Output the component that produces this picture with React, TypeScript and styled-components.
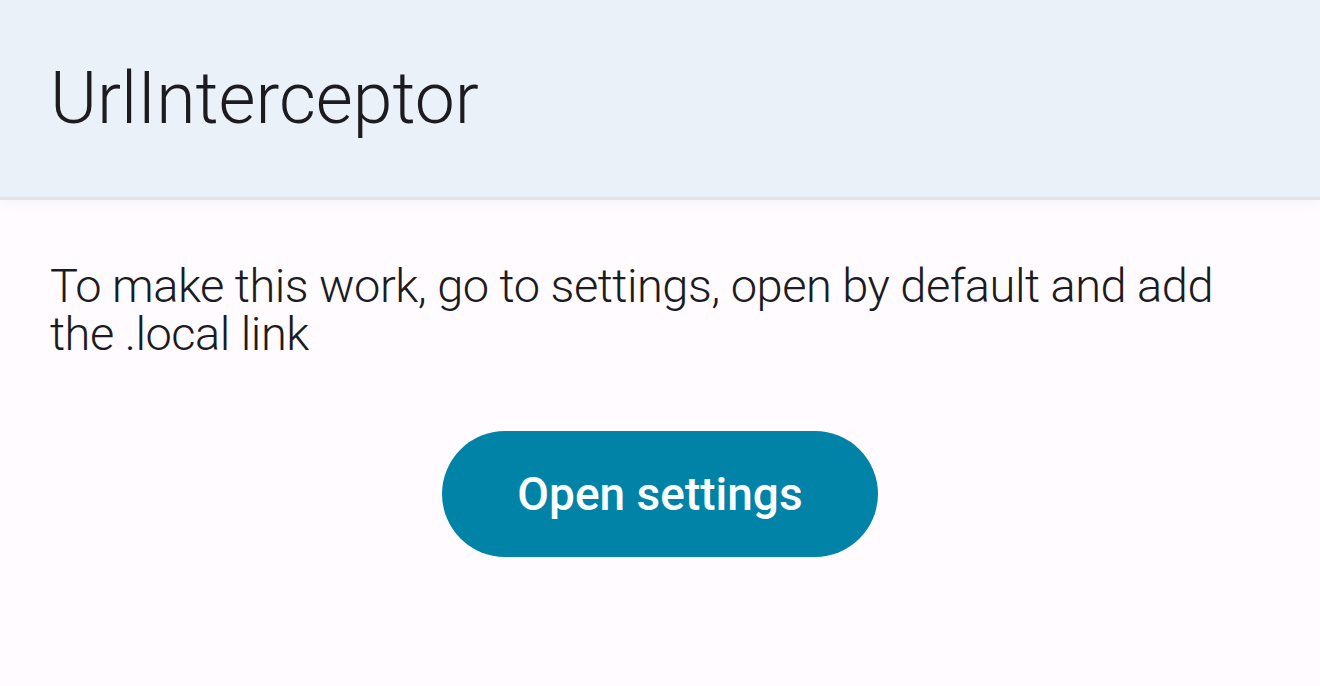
import styled, { createGlobalStyle } from "styled-components";

const GlobalStyle = createGlobalStyle`
  html, body {
    margin: 0;
    padding: 0;
    background: #fffbfe;
  }
  body {
    font-family: Roboto, "Noto Sans", sans-serif;
  }
`;

const Screen = styled.div`
  width: 1320px;
  height: 686px;
  display: flex;
  flex-direction: column;
  background: #fffbfe;
  overflow: hidden;
`;

const TopBar = styled.header`
  height: 200px;
  flex-shrink: 0;
  display: flex;
  align-items: center;
  padding: 0 50px;
  box-sizing: border-box;
  background: #ebf1f8;
  border-bottom: 3px solid #e4e4e7;
  box-shadow: 0 2px 14px rgba(0, 0, 0, 0.05);
  position: relative;
  z-index: 1;
`;

const Title = styled.h1`
  margin: 0;
  font-size: 71.5px;
  font-weight: 300;
  color: #1c1b1f;
  letter-spacing: 0;
`;

const Content = styled.main`
  display: flex;
  flex-direction: column;
  padding: 62px 50px 0;
`;

const Hint = styled.p`
  margin: 0;
  max-width: 1180px;
  font-size: 47px;
  line-height: 48px;
  font-weight: 300;
  color: #1c1b1f;
  letter-spacing: -0.5px;
`;

const ButtonRow = styled.div`
  display: flex;
  justify-content: center;
  margin-top: 73px;
`;

const PillButton = styled.button`
  width: 436px;
  height: 126px;
  padding: 0;
  border: none;
  border-radius: 63px;
  background: #0083a7;
  color: #ffffff;
  font-family: Roboto, "Noto Sans", sans-serif;
  font-size: 46px;
  font-weight: 500;
  cursor: pointer;
`;

export default function App() {
  return (
    <>
      <GlobalStyle />
      <Screen>
        <TopBar>
          <Title>UrlInterceptor</Title>
        </TopBar>
        <Content>
          <Hint>
            To make this work, go to settings, open by default and add the .local link
          </Hint>
          <ButtonRow>
            <PillButton>Open settings</PillButton>
          </ButtonRow>
        </Content>
      </Screen>
    </>
  );
}
